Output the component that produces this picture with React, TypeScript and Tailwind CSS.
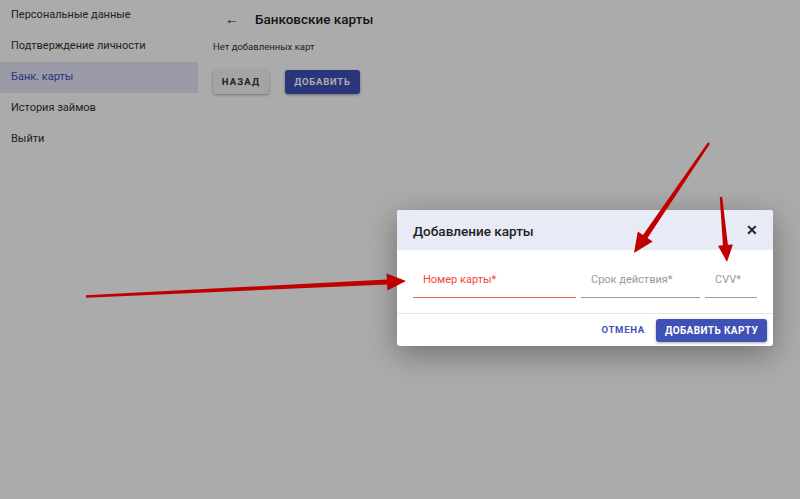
import React from 'react';

const menu = ['Персональные данные', 'Подтверждение личности', 'Банк. карты', 'История займов', 'Выйти'];

// tapered arrow: shaft from (x1,y1) to tip (x2,y2)
const arrowPoints = (x1: number, y1: number, x2: number, y2: number, w0: number, w1: number, headLen: number, headW: number) => {
  const dx = x2 - x1;
  const dy = y2 - y1;
  const len = Math.hypot(dx, dy);
  const ux = dx / len;
  const uy = dy / len;
  const nx = -uy;
  const ny = ux;
  const bx = x2 - ux * headLen;
  const by = y2 - uy * headLen;
  const p = (x: number, y: number) => `${x.toFixed(1)},${y.toFixed(1)}`;
  return [
    p(x1 + nx * w0 / 2, y1 + ny * w0 / 2),
    p(bx + nx * w1 / 2, by + ny * w1 / 2),
    p(bx + nx * headW / 2, by + ny * headW / 2),
    p(x2, y2),
    p(bx - nx * headW / 2, by - ny * headW / 2),
    p(bx - nx * w1 / 2, by - ny * w1 / 2),
    p(x1 - nx * w0 / 2, y1 - ny * w0 / 2),
  ].join(' ');
};

const Field = ({ label, width, active }: { label: string; width: string; active?: boolean }) => (
  <div className={`${width} h-[31px] flex flex-col`}>
    <div className={`flex-1 pl-[10px] pt-[5px] text-[11px] ${active ? 'text-[#f44336]' : 'text-[#999]'}`}>{label}</div>
    <div className={active ? 'h-[1.5px] bg-[#f0605a]' : 'h-px bg-[#9a9a9a]'} />
  </div>
);

const App = () => {
  return (
    <div className="relative w-[800px] h-[499px] overflow-hidden bg-white font-['Roboto',sans-serif] text-[#222]">
      <div className="flex h-full">
        <div className="w-[198px] flex flex-col">
          {menu.map((m) => (
            <div
              key={m}
              className={`h-[31px] flex items-center pl-[11px] text-[11px] ${m === 'Банк. карты' ? 'bg-[#e6e8fa] text-[#3f51b5]' : 'text-[#333]'}`}
            >
              {m}
            </div>
          ))}
        </div>
        <div className="flex-1 pl-[15px]">
          <div className="flex items-center h-[38px] pl-[12px]">
            <span className="text-[14px] w-[30px] leading-none">←</span>
            <span className="text-[13.5px] font-medium text-[#222]">Банковские карты</span>
          </div>
          <div className="text-[9.5px] text-[#333] mt-[2px]">Нет добавленных карт</div>
          <div className="flex gap-[16px] mt-[16px]">
            <button className="w-[56px] h-[24px] rounded-[3px] bg-[#f5f5f5] shadow-[0_1px_3px_rgba(0,0,0,0.35)] text-[9.5px] font-bold tracking-[0.12em] text-[#333]">НАЗАД</button>
            <button className="w-[75px] h-[24px] rounded-[3px] bg-[#3f51b5] shadow-[0_1px_3px_rgba(0,0,0,0.35)] text-[9.5px] font-bold tracking-[0.08em] text-white">ДОБАВИТЬ</button>
          </div>
        </div>
      </div>

      <div className="absolute inset-0 bg-black/[0.33]" />

      <div className="absolute left-[397px] top-[210px] w-[376px] bg-white rounded-[3px] shadow-[0_8px_30px_rgba(0,0,0,0.35)] overflow-hidden">
        <div className="h-[40px] bg-[#e8eaf6] flex items-center justify-between pl-[16px] pr-[15px]">
          <span className="text-[13.5px] font-medium text-[#222] mt-[2px]">Добавление карты</span>
          <span className="text-[14px] font-bold text-[#222] leading-none">✕</span>
        </div>
        <div className="h-[63px] flex items-start gap-[5px] px-[16px] pt-[17px]">
          <Field label="Номер карты*" width="w-[163px]" active />
          <Field label="Срок действия*" width="w-[119px]" />
          <Field label="CVV*" width="w-[52px]" />
        </div>
        <div className="border-t border-[#e6e6e6] h-[33px] flex items-center justify-end gap-[11px] pr-[6px]">
          <button className="text-[9.5px] font-bold tracking-[0.08em] text-[#3f51b5]">ОТМЕНА</button>
          <button className="w-[111px] h-[23px] rounded-[3px] bg-[#3f51b5] shadow-[0_1px_3px_rgba(0,0,0,0.35)] text-[10px] font-bold tracking-[0.04em] text-white">ДОБАВИТЬ КАРТУ</button>
        </div>
      </div>

      <svg className="absolute inset-0" width="800" height="499" viewBox="0 0 800 499">
        <polygon points={arrowPoints(86, 296.5, 406, 281, 2.5, 5, 19, 17)} fill="#c00000" />
        <polygon points={arrowPoints(709, 143, 634, 253, 2.5, 5.5, 20, 18)} fill="#c00000" />
        <polygon points={arrowPoints(721, 197, 727, 262, 2.5, 5, 17, 15)} fill="#c00000" />
      </svg>
    </div>
  );
};

export default App;
